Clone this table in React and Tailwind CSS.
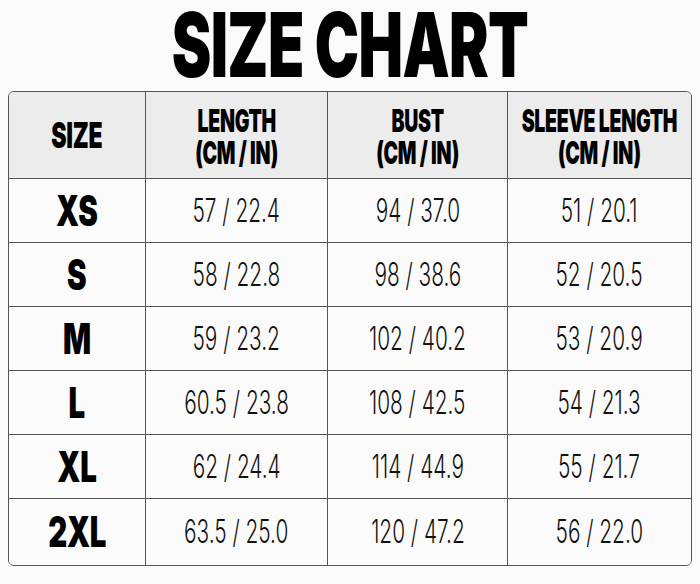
import React from "react";

const rows = [
  ["XS", "57 / 22.4", "94 / 37.0", "51 / 20.1"],
  ["S", "58 / 22.8", "98 / 38.6", "52 / 20.5"],
  ["M", "59 / 23.2", "102 / 40.2", "53 / 20.9"],
  ["L", "60.5 / 23.8", "108 / 42.5", "54 / 21.3"],
  ["XL", "62 / 24.4", "114 / 44.9", "55 / 21.7"],
  ["2XL", "63.5 / 25.0", "120 / 47.2", "56 / 22.0"],
];

const headers = [
  ["LENGTH", "(CM / IN)"],
  ["BUST", "(CM / IN)"],
  ["SLEEVE LENGTH", "(CM / IN)"],
];

export default function App() {
  return (
    <div className="w-[700px] h-[584px] bg-[#fafafa] font-['Inter',sans-serif] text-black overflow-hidden">
      <div className="h-[91px] flex justify-center items-start pt-[3px]">
        <span className="inline-block text-[90px] leading-[84px] font-black tracking-[-1px] scale-x-[0.66] whitespace-nowrap">
          SIZE CHART
        </span>
      </div>
      <div className="mx-[8px] w-[684px] border-[1.5px] border-[#555] rounded-[6px] overflow-hidden">
        <div className="grid grid-cols-[137px_182px_180px_182px] h-[87px] bg-[#ececec] border-b-[1.5px] border-[#555]">
          <div className="flex items-center justify-center border-r-[1.5px] border-[#555]">
            <span className="inline-block text-[36px] leading-[40px] font-black scale-x-[0.64] tracking-[-0.5px]">SIZE</span>
          </div>
          {headers.map((h, i) => (
            <div
              key={i}
              className={
                i < 2
                  ? "flex items-center justify-center border-r-[1.5px] border-[#555] pt-[3px]"
                  : "flex items-center justify-center pt-[3px]"
              }
            >
              <span className="inline-block text-center text-[31px] leading-[32px] font-black scale-x-[0.63] whitespace-nowrap tracking-[-0.5px]">
                {h[0]}
                <br />
                {h[1]}
              </span>
            </div>
          ))}
        </div>
        {rows.map((r, ri) => (
          <div
            key={ri}
            className={
              ri < rows.length - 1
                ? "grid grid-cols-[137px_182px_180px_182px] h-[64px] bg-[#fbfbfb] border-b-[1.5px] border-[#555]"
                : "grid grid-cols-[137px_182px_180px_182px] h-[66px] bg-[#fbfbfb]"
            }
          >
            <div className="flex items-center justify-center border-r-[1.5px] border-[#555]">
              <span className="inline-block text-[42px] leading-[46px] font-black scale-x-[0.7] tracking-[-0.5px]">{r[0]}</span>
            </div>
            {r.slice(1).map((v, vi) => (
              <div
                key={vi}
                className={
                  vi < 2
                    ? "flex items-center justify-center border-r-[1.5px] border-[#555]"
                    : "flex items-center justify-center"
                }
              >
                <span className="inline-block text-[32px] leading-[36px] font-light text-[#111] scale-x-[0.65] whitespace-nowrap">{v}</span>
              </div>
            ))}
          </div>
        ))}
      </div>
    </div>
  );
}
